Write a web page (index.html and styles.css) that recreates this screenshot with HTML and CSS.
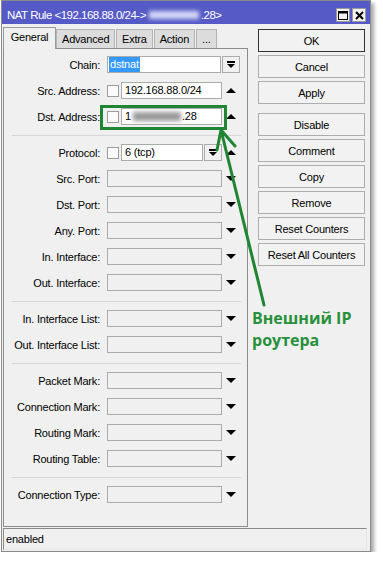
FILE: index.html
```html
<!DOCTYPE html>
<html lang="ru">
<head>
    <meta charset="UTF-8">
    <title>NAT Rule</title>
    <link rel="stylesheet" href="styles.css">
</head>
<body>
    <div class="window">
        <div class="titlebar">
            <span class="title">NAT Rule &lt;192.168.88.0/24-&gt;<span class="blur-title"></span>.28&gt;</span>
            <span class="tbtn">
                <svg width="10" height="9" viewBox="0 0 10 9"><rect x="0.5" y="0.5" width="9" height="8" fill="none" stroke="#000"/><rect x="0" y="0" width="10" height="2.5" fill="#000"/></svg>
            </span>
            <span class="tbtn">
                <svg width="9" height="9" viewBox="0 0 9 9"><path d="M1 1L8 8M8 1L1 8" stroke="#000" stroke-width="2"/></svg>
            </span>
        </div>

        <div class="main">
            <div class="left">
                <div class="tabs">
                    <div class="tab active">General</div>
                    <div class="tab">Advanced</div>
                    <div class="tab">Extra</div>
                    <div class="tab">Action</div>
                    <div class="tab">...</div>
                </div>
                <div class="panel">
                    <div class="group first">
                        <div class="row">
                            <label>Chain:</label>
                            <div class="ctrl wide">
                                <div class="field white"><span class="selected">dstnat</span></div>
                                <span class="dd"><svg width="8" height="8" viewBox="0 0 8 8"><rect x="0" y="0" width="8" height="2"/><path d="M0 3h8l-4 4z"/></svg></span>
                            </div>
                        </div>
                        <div class="row">
                            <label>Src. Address:</label>
                            <div class="ctrl">
                                <span class="check"></span>
                                <div class="field white">192.168.88.0/24</div>
                            </div>
                            <span class="arrow up"></span>
                        </div>
                        <div class="row">
                            <label>Dst. Address:</label>
                            <div class="ctrl">
                                <span class="check"></span>
                                <div class="field white">1<span class="blur-ip"></span>.28</div>
                            </div>
                            <span class="arrow up"></span>
                        </div>
                    </div>
                    <div class="sep"></div>

                    <div class="group">
                        <div class="row">
                            <label>Protocol:</label>
                            <div class="ctrl">
                                <span class="check"></span>
                                <div class="field white">6 (tcp)</div>
                                <span class="dd"><svg width="8" height="8" viewBox="0 0 8 8"><rect x="0" y="0" width="8" height="2"/><path d="M0 3h8l-4 4z"/></svg></span>
                            </div>
                            <span class="arrow up"></span>
                        </div>
                        <div class="row"><label>Src. Port:</label><div class="ctrl"><div class="field"></div></div><span class="arrow down"></span></div>
                        <div class="row"><label>Dst. Port:</label><div class="ctrl"><div class="field"></div></div><span class="arrow down"></span></div>
                        <div class="row"><label>Any. Port:</label><div class="ctrl"><div class="field"></div></div><span class="arrow down"></span></div>
                        <div class="row"><label>In. Interface:</label><div class="ctrl"><div class="field"></div></div><span class="arrow down"></span></div>
                        <div class="row"><label>Out. Interface:</label><div class="ctrl"><div class="field"></div></div><span class="arrow down"></span></div>
                    </div>
                    <div class="sep"></div>

                    <div class="group">
                        <div class="row"><label>In. Interface List:</label><div class="ctrl"><div class="field"></div></div><span class="arrow down"></span></div>
                        <div class="row"><label>Out. Interface List:</label><div class="ctrl"><div class="field"></div></div><span class="arrow down"></span></div>
                    </div>
                    <div class="sep"></div>

                    <div class="group">
                        <div class="row"><label>Packet Mark:</label><div class="ctrl"><div class="field"></div></div><span class="arrow down"></span></div>
                        <div class="row"><label>Connection Mark:</label><div class="ctrl"><div class="field"></div></div><span class="arrow down"></span></div>
                        <div class="row"><label>Routing Mark:</label><div class="ctrl"><div class="field"></div></div><span class="arrow down"></span></div>
                        <div class="row"><label>Routing Table:</label><div class="ctrl"><div class="field"></div></div><span class="arrow down"></span></div>
                    </div>
                    <div class="sep"></div>

                    <div class="group">
                        <div class="row"><label>Connection Type:</label><div class="ctrl"><div class="field"></div></div><span class="arrow down"></span></div>
                    </div>
                </div>
            </div>

            <div class="right">
                <div class="btn ok">OK</div>
                <div class="btn">Cancel</div>
                <div class="btn">Apply</div>
                <div class="btn-gap"></div>
                <div class="btn">Disable</div>
                <div class="btn">Comment</div>
                <div class="btn">Copy</div>
                <div class="btn">Remove</div>
                <div class="btn">Reset Counters</div>
                <div class="btn">Reset All Counters</div>
                <div class="note">Внешний IP<br>роутера</div>
            </div>
        </div>

        <div class="status">enabled</div>
    </div>

    <!-- annotation drawn over the window -->
    <svg class="overlay" width="383" height="563" viewBox="0 0 383 563">
        <rect x="101.5" y="106.5" width="124" height="22" fill="none" stroke="#1f8533" stroke-width="3"/>
        <path d="M264 305L221 130M221 130L217 150M221 130L235 146" fill="none" stroke="#1f8533" stroke-width="3" stroke-linecap="round"/>
    </svg>
</body>
</html>
```

FILE: styles.css
```css
body {
    margin: 0;
    background: #fff;
    font-family: "Liberation Sans", Arial, sans-serif;
    font-size: 11px;
    letter-spacing: -0.2px;
    color: #000;
    position: relative;
}
.window {
    width: 368px;
    margin-left: 1px;
    border: 1px solid #8a8a8a;
    background: #f0f0f0;
    box-shadow: 3px 3px 4px rgba(0, 0, 0, 0.35);
}
.titlebar {
    height: 23px;
    box-sizing: border-box;
    padding: 0 4px 2px 5px;
    background: #565ac6;
    color: #fff;
    display: flex;
    align-items: flex-end;
}
.title {
    flex: 1;
    font-size: 11.5px;
    letter-spacing: -0.5px;
    line-height: 14px;
    white-space: nowrap;
}
.blur-title {
    display: inline-block;
    width: 50px;
    height: 8px;
    margin: 0 2px 0 3px;
    background: rgba(235, 238, 255, 0.85);
    filter: blur(2px);
}
.tbtn {
    width: 14px;
    height: 14px;
    box-sizing: border-box;
    margin-left: 2px;
    border: 1px solid #9a9a9a;
    background: #f2f2f2;
    display: flex;
    align-items: center;
    justify-content: center;
}
.main {
    display: flex;
}
.left {
    padding: 3px 0 0 1px;
}
.tabs {
    display: flex;
    align-items: flex-end;
    height: 21px;
}
.tab {
    height: 19px;
    box-sizing: border-box;
    padding: 0 5px;
    margin-left: 1px;
    border: 1px solid #b4b4b4;
    border-bottom: none;
    background: #dcdcdc;
    line-height: 18px;
    text-align: center;
}
.tab.active {
    height: 22px;
    width: 53px;
    margin: 0 0 -1px 0;
    padding-bottom: 1px;
    border-color: #9a9a9a;
    background: #f0f0f0;
    line-height: 18px;
    position: relative;
}
.tab:nth-child(2) {
    margin-left: 0;
    width: 59px;
}
.panel {
    width: 245px;
    height: 479px;
    box-sizing: border-box;
    border: 1px solid #8d8d8d;
    background: #f0f0f0;
}
.group {
    display: flex;
    flex-direction: column;
    gap: 9px;
    padding: 8px 0 10px;
}
.group.first {
    padding-top: 7px;
}
.sep {
    height: 1px;
    width: 229px;
    margin-left: 8px;
    background: #d6d6d6;
}
.row {
    display: flex;
    align-items: center;
    height: 17px;
}
.row label {
    width: 96px;
    margin-right: 7px;
    text-align: right;
    white-space: nowrap;
}
.ctrl {
    width: 115px;
    height: 17px;
    display: flex;
    align-items: center;
}
.ctrl.wide {
    width: 133px;
}
.field {
    flex: 1;
    height: 17px;
    box-sizing: border-box;
    padding-left: 3px;
    border: 1px solid #ababab;
    background: #f0f0f0;
    line-height: 15px;
    white-space: nowrap;
    overflow: hidden;
}
.field.white {
    background: #fff;
}
.selected {
    display: inline-block;
    margin-left: -2px;
    padding: 0 1px;
    background: #3399ff;
    color: #fff;
}
.blur-ip {
    display: inline-block;
    width: 48px;
    height: 9px;
    margin: 0 1px 0 2px;
    vertical-align: -1px;
    background: #9a9a9a;
    filter: blur(2px);
}
.check {
    width: 12px;
    height: 12px;
    box-sizing: border-box;
    margin-right: 2px;
    border: 1px solid #9c9c9c;
    background: #fafafa;
}
.dd {
    width: 18px;
    height: 17px;
    box-sizing: border-box;
    margin-left: 1px;
    border: 1px solid #ababab;
    background: #f0f0f0;
    display: flex;
    align-items: center;
    justify-content: center;
}
.arrow {
    width: 0;
    height: 0;
    margin-left: 4px;
    border-left: 5px solid transparent;
    border-right: 5px solid transparent;
}
.arrow.down {
    border-top: 5px solid #000;
}
.arrow.up {
    border-bottom: 5px solid #000;
}
.right {
    width: 107px;
    margin-left: 10px;
    padding-top: 5px;
}
.btn {
    height: 23px;
    box-sizing: border-box;
    margin-bottom: 3px;
    border: 1px solid #adadad;
    background: #f2f2f2;
    display: flex;
    align-items: center;
    justify-content: center;
    white-space: nowrap;
}
.btn.ok {
    border-color: #333;
}
.btn-gap {
    height: 6px;
}
.note {
    margin: 41px 0 0 -6px;
    font-family: "Open Sans", sans-serif;
    font-weight: 700;
    font-size: 16px;
    line-height: 22px;
    letter-spacing: 0;
    color: #27903a;
    white-space: nowrap;
}
.status {
    height: 22px;
    box-sizing: border-box;
    margin: 1px 3px 1px 1px;
    padding-left: 2px;
    border: 1px solid;
    border-color: #8a8a8a #e6e6e6 #e6e6e6 #8a8a8a;
    line-height: 20px;
}
.overlay {
    position: absolute;
    left: 0;
    top: 0;
    pointer-events: none;
}
```
